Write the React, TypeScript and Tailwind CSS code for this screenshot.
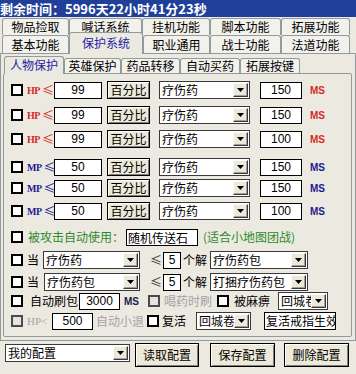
import React from "react";

const Arrow = () => (
  <div className="w-[15px] h-[14px] shrink-0 bg-[#ece9d8] border border-t-[#fafafa] border-l-[#fafafa] border-b-[#3a3a3a] border-r-[#3a3a3a] shadow-[inset_-1px_-1px_0_#a0a0a0] flex items-center justify-center">
    <svg width="7" height="4" viewBox="0 0 7 4">
      <path d="M0 0h7L3.5 4z" fill="#000" />
    </svg>
  </div>
);

function Sel({ cls, text }: { cls: string; text: string }) {
  return (
    <div className={`${cls} h-[18px] shrink-0 bg-white border border-[#3a3a3a] flex items-center pr-[1px] overflow-hidden`}>
      <span className="flex-1 min-w-0 pl-[2px] text-[12px] leading-[16px] whitespace-nowrap overflow-hidden">{text}</span>
      <Arrow />
    </div>
  );
}

function Inp({ cls, v }: { cls: string; v: string }) {
  return (
    <div className={`${cls} h-[17px] shrink-0 bg-white border border-black flex items-center justify-center text-[12px] leading-[15px] font-['Liberation_Sans',sans-serif]`}>
      {v}
    </div>
  );
}

function Cb({ dis = false }: { dis?: boolean }) {
  return (
    <div
      className={`w-[12px] h-[12px] shrink-0 border-2 ${dis ? "border-[#4a4a4a] bg-[#e4e4e4]" : "border-black bg-white"}`}
    />
  );
}

function Btn({ cls, label }: { cls: string; label: string }) {
  return (
    <div className={`${cls} shrink-0 border border-black bg-[#ece9d8] shadow-[inset_1px_1px_0_#ffffff,inset_-1px_-1px_0_#808080] flex items-center justify-center text-[12px] leading-none`}>
      {label}
    </div>
  );
}

function TopTab({ cls, label, sel = false }: { cls: string; label: string; sel?: boolean }) {
  return (
    <div
      className={`${cls} shrink-0 flex items-center justify-center text-[12px] leading-none rounded-t-[3px] border border-[#919b9c] border-b-0 ${
        sel ? "relative z-10 -mt-[3px] h-[22px] bg-[#ebe9e0] text-[#2323a6] pb-[2px]" : "h-full bg-[#f2f1eb] text-black"
      }`}
    >
      {label}
    </div>
  );
}

function InTab({ cls, label, sel = false }: { cls: string; label: string; sel?: boolean }) {
  return (
    <div
      className={`${cls} shrink-0 flex items-center justify-center text-[12px] leading-none rounded-t-[3px] border border-[#919b9c] border-b-0 ${
        sel ? "relative z-10 h-[18px] bg-[#ebe9e0] text-[#2323a6] pb-[1px]" : "mt-[2px] h-[15px] bg-[#f2f1eb] text-black"
      }`}
    >
      {label}
    </div>
  );
}

const RED = "text-[#d42c2c]";
const BLUE = "text-[#1c1c90]";

const rows = [
  { mt: "mt-[7px]", k: "HP", v: "99", ms: "150", red: true },
  { mt: "mt-[7px]", k: "HP", v: "99", ms: "150", red: true },
  { mt: "mt-[6px]", k: "HP", v: "99", ms: "100", red: true },
  { mt: "mt-[10px]", k: "MP", v: "50", ms: "150", red: false },
  { mt: "mt-[3px]", k: "MP", v: "50", ms: "150", red: false },
  { mt: "mt-[5px]", k: "MP", v: "50", ms: "100", red: false },
];

export default function App() {
  return (
    <div className="w-[356px] h-[374px] overflow-hidden bg-[#ebe9e0] text-black font-['Noto_Sans_CJK_SC','Noto_Sans',sans-serif]">
      {/* title */}
      <div className="h-[17px] bg-[#1f3f98] flex items-center text-white text-[13px] font-bold leading-none whitespace-nowrap">
        剩余时间：5996天22小时41分23秒
      </div>

      {/* top tabs row 1 */}
      <div className="mt-[1px] h-[17px] pl-[2px] flex">
        <TopTab cls="w-[67px]" label="物品捡取" />
        <TopTab cls="w-[73px]" label="喊话系统" />
        <TopTab cls="w-[68px]" label="挂机功能" />
        <TopTab cls="w-[71px]" label="脚本功能" />
        <TopTab cls="w-[69px]" label="拓展功能" />
      </div>
      {/* top tabs row 2 */}
      <div className="h-[18px] pl-[2px] flex items-start relative z-10">
        <TopTab cls="w-[67px] h-full" label="基本功能" />
        <TopTab cls="w-[74px]" label="保护系统" sel />
        <TopTab cls="w-[67px] h-full" label="职业通用" />
        <TopTab cls="w-[71px] h-full" label="战士功能" />
        <TopTab cls="w-[69px] h-full" label="法道功能" />
      </div>

      {/* outer panel */}
      <div className="w-[356px] h-[288px] border border-[#919b9c]">
        <div className="h-[19px] pl-[3px] pt-[2px] flex items-start">
          <InTab cls="w-[60px]" label="人物保护" sel />
          <InTab cls="w-[57px]" label="英雄保护" />
          <InTab cls="w-[59px]" label="药品转移" />
          <InTab cls="w-[60px]" label="自动买药" />
          <InTab cls="w-[60px]" label="拓展按键" />
        </div>
        <div className="ml-[2px] w-[349px] h-[264px] border border-[#919b9c] rounded-[2px] pl-[7px] flex flex-col text-[12px]">
          {rows.map((r, i) => (
            <div key={i} className={`${r.mt} h-[18px] flex items-center shrink-0`}>
              <Cb />
              <div className={`ml-[4px] w-[27px] flex items-center ${r.red ? RED : BLUE}`}>
                <span className="text-[10px] font-bold tracking-[-0.5px] font-['Liberation_Serif',serif]">{r.k}</span>
                <span className="ml-[2px] text-[12px] leading-none">≤</span>
              </div>
              <Inp cls="w-[48px]" v={r.v} />
              <Btn cls="ml-[5px] w-[43px] h-[18px]" label="百分比" />
              <Sel cls="ml-[9px] w-[91px]" text="疗伤药" />
              <Inp cls="ml-[10px] w-[42px]" v={r.ms} />
              <span className={`ml-[8px] text-[10px] font-bold font-['Liberation_Sans',sans-serif] ${r.red ? RED : BLUE}`}>MS</span>
            </div>
          ))}

          {/* 被攻击自动使用 */}
          <div className="mt-[8px] h-[18px] flex items-center shrink-0">
            <Cb />
            <span className="ml-[5px] w-[98px] text-[#2e8a2e] whitespace-nowrap">被攻击自动使用：</span>
            <div className="w-[72px] h-[17px] shrink-0 bg-white border border-black flex items-center pl-[1px] overflow-hidden whitespace-nowrap leading-[15px]">
              随机传送石
            </div>
            <span className="ml-[5px] text-[#2e8a2e] whitespace-nowrap">(适合小地图团战)</span>
          </div>

          {/* 当 rows */}
          <div className="mt-[5px] h-[18px] flex items-center shrink-0">
            <Cb />
            <span className="ml-[4px] w-[16px]">当</span>
            <Sel cls="w-[97px]" text="疗伤药" />
            <span className="ml-[10px] w-[13px] text-[#333]">≤</span>
            <Inp cls="w-[18px]" v="5" />
            <span className="ml-[2px] w-[24px] whitespace-nowrap">个解</span>
            <Sel cls="ml-[3px] w-[98px]" text="疗伤药包" />
          </div>
          <div className="mt-[4px] h-[18px] flex items-center shrink-0">
            <Cb />
            <span className="ml-[4px] w-[17px]">当</span>
            <Sel cls="w-[96px]" text="疗伤药包" />
            <span className="ml-[10px] w-[13px] text-[#333]">≤</span>
            <Inp cls="w-[18px]" v="5" />
            <span className="ml-[2px] w-[24px] whitespace-nowrap">个解</span>
            <Sel cls="ml-[3px] w-[98px]" text="打捆疗伤药包" />
          </div>

          {/* 自动刷包 */}
          <div className="mt-[1px] h-[18px] flex items-center shrink-0">
            <Cb />
            <span className="ml-[7px] w-[49px] whitespace-nowrap">自动刷包</span>
            <Inp cls="w-[41px]" v="3000" />
            <span className="ml-[4px] w-[14px] text-[10px] font-bold text-[#1a1a50] font-['Liberation_Sans',sans-serif]">MS</span>
            <div className="ml-[10px]">
              <Cb dis />
            </div>
            <span className="ml-[4px] w-[53px] text-[#a3a3a3] whitespace-nowrap">喝药时刷</span>
            <Cb />
            <span className="ml-[5px] w-[36px] whitespace-nowrap">被麻痹</span>
            <Sel cls="ml-[8px] w-[50px]" text="回城卷" />
          </div>

          {/* HP< */}
          <div className="mt-[2px] h-[18px] flex items-center shrink-0">
            <Cb dis />
            <span className="ml-[4px] w-[25px] text-[11px] text-[#a3a3a3] font-['Liberation_Serif',serif]">HP&lt;</span>
            <Inp cls="w-[41px]" v="500" />
            <span className="ml-[3px] w-[48px] text-[#a3a3a3] whitespace-nowrap">自动小退</span>
            <div className="ml-[3px]">
              <Cb />
            </div>
            <span className="ml-[3px] w-[24px] whitespace-nowrap">复活</span>
            <Sel cls="ml-[10px] w-[55px]" text="回城卷" />
            <div className="ml-[13px] w-[72px] h-[18px] shrink-0 bg-white border border-black flex items-center pl-[1px] overflow-hidden whitespace-nowrap leading-[16px]">
              复活戒指生效
            </div>
          </div>
        </div>
      </div>

      {/* bottom bar */}
      <div className="mt-[2px] flex items-start text-[12px]">
        <Sel cls="ml-[5px] mt-[1px] w-[125px]" text="我的配置" />
        <Btn cls="ml-[5px] w-[64px] h-[24px]" label="读取配置" />
        <Btn cls="ml-[11px] w-[65px] h-[24px]" label="保存配置" />
        <Btn cls="ml-[9px] w-[65px] h-[24px]" label="删除配置" />
      </div>
    </div>
  );
}
